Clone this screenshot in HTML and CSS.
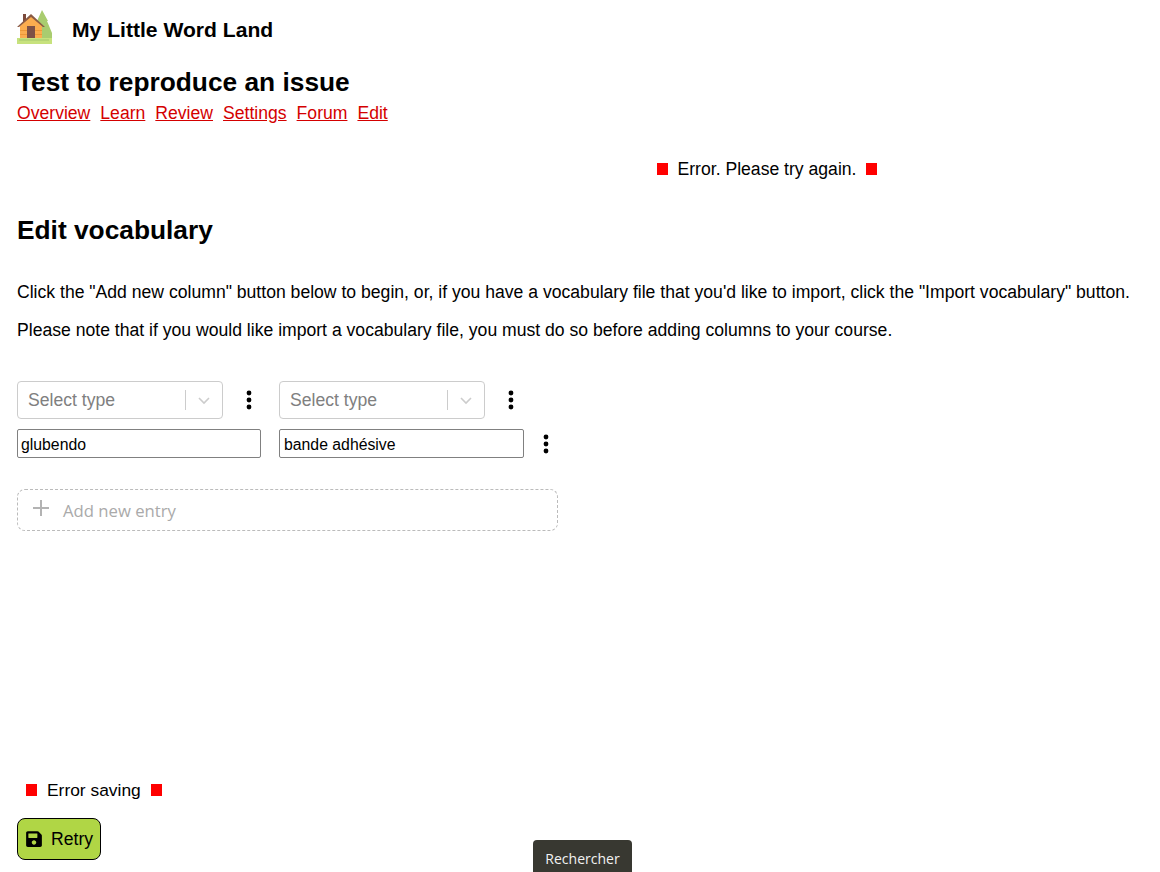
FILE: index.html
```html
<!DOCTYPE html>
<html>
	<head>
		<meta charset="utf-8">
		<title>My Little Word Land</title>
		<link rel="stylesheet" href="styles.css">
	</head>
	<body>
		<!-- header -->
		<div class="brand">
			<svg class="logo" viewBox="0 0 36 36" width="36" height="36">
				<polygon points="25,1 31,12 30,12 35,24 35,29 20,29 20,12" fill="#a9cc6f"/>
				<rect x="6" y="5" width="3" height="8" fill="#7b4a3c"/>
				<polygon points="3,17 14,6 25,17 25,29 3,29" fill="#fbad4f"/>
				<polygon points="0,18 14,5 28,18 26,18 14,8 2,18" fill="#8a5a44"/>
				<rect x="3" y="21" width="22" height="1" fill="#ee9838"/>
				<rect x="3" y="25" width="22" height="1" fill="#ee9838"/>
				<rect x="10" y="17" width="8" height="12" fill="#7d5146"/>
				<rect x="0" y="29" width="35" height="6" fill="#c7e27d"/>
				<rect x="2" y="30" width="30" height="2" fill="#a9cc6f" opacity="0.6"/>
			</svg>
			<span class="brand-name">My Little Word Land</span>
		</div>
		<h1 class="course-title">Test to reproduce an issue</h1>
		<div class="course-nav">
			<a href="#">Overview</a>
			<a href="#">Learn</a>
			<a href="#">Review</a>
			<a href="#">Settings</a>
			<a href="#">Forum</a>
			<a href="#">Edit</a>
		</div>

		<div class="error-top">
			<span class="err-square"></span>
			<span>Error. Please try again.</span>
			<span class="err-square"></span>
		</div>

		<h2 class="section-title">Edit vocabulary</h2>
		<p class="intro">Click the "Add new column" button below to begin, or, if you have a vocabulary file that you'd like to import, click the "Import vocabulary" button.</p>
		<p class="intro">Please note that if you would like import a vocabulary file, you must do so before adding columns to your course.</p>

		<!-- vocabulary table -->
		<div class="col-row">
			<div class="col-head">
				<div class="select">
					<span class="select-text">Select type</span>
					<span class="select-sep"></span>
					<svg class="select-arrow" viewBox="0 0 20 20" width="20" height="20"><path d="M5 8l5 5 5-5" fill="none" stroke="#ccc" stroke-width="1.6"/></svg>
				</div>
				<svg class="dots" viewBox="0 0 8 24" width="8" height="24"><circle cx="4" cy="5" r="2.4"/><circle cx="4" cy="12" r="2.4"/><circle cx="4" cy="19" r="2.4"/></svg>
			</div>
			<div class="col-head">
				<div class="select">
					<span class="select-text">Select type</span>
					<span class="select-sep"></span>
					<svg class="select-arrow" viewBox="0 0 20 20" width="20" height="20"><path d="M5 8l5 5 5-5" fill="none" stroke="#ccc" stroke-width="1.6"/></svg>
				</div>
				<svg class="dots" viewBox="0 0 8 24" width="8" height="24"><circle cx="4" cy="5" r="2.4"/><circle cx="4" cy="12" r="2.4"/><circle cx="4" cy="19" r="2.4"/></svg>
			</div>
		</div>
		<div class="entry-row">
			<input class="entry" type="text" value="glubendo">
			<input class="entry entry-wide" type="text" value="bande adhésive">
			<svg class="dots" viewBox="0 0 8 24" width="8" height="24"><circle cx="4" cy="5" r="2.4"/><circle cx="4" cy="12" r="2.4"/><circle cx="4" cy="19" r="2.4"/></svg>
		</div>

		<div class="add-entry">
			<svg class="plus" viewBox="0 0 16 16" width="16" height="16"><path d="M8 0v16M0 8h16" stroke="#b3b3b3" stroke-width="2"/></svg>
			<span>Add new entry</span>
		</div>

		<div class="error-save">
			<span class="err-square"></span>
			<span>Error saving</span>
			<span class="err-square"></span>
		</div>
		<button class="retry">
			<svg viewBox="0 0 448 512" width="16" height="18"><path d="M433.9 129.9l-83.9-83.9A48 48 0 0 0 316.1 32H48C21.5 32 0 53.5 0 80v352c0 26.5 21.5 48 48 48h352c26.5 0 48-21.5 48-48V163.9a48 48 0 0 0-14.1-34zM224 416c-35.3 0-64-28.7-64-64s28.7-64 64-64 64 28.7 64 64-28.7 64-64 64zm96-304.5V212c0 6.6-5.4 12-12 12H76c-6.6 0-12-5.4-12-12V108c0-6.6 5.4-12 12-12h228.5c3.2 0 6.2 1.3 8.5 3.5l3.5 3.5c2.2 2.2 3.5 5.3 3.5 8.5z"/></svg>
			<span>Retry</span>
		</button>

		<div class="tooltip">Rechercher</div>
	</body>
</html>
```

FILE: styles.css
```css
* {
	box-sizing: border-box;
}

body {
	margin: 0;
	padding: 0 17px;
	height: 872px;
	overflow: hidden;
	position: relative;
	font-family: "Liberation Sans", Arial, sans-serif;
	font-size: 17.6px;
	color: #000;
	background: #fff;
}

.brand {
	display: flex;
	align-items: center;
	height: 36px;
	margin-top: 12px;
}

.logo {
	display: block;
	margin-top: -6px;
}

.brand-name {
	margin-left: 19px;
	font-size: 21.1px;
	font-weight: bold;
}

.course-title {
	margin: 19px 0 0;
	font-size: 26.3px;
	line-height: 30px;
	font-weight: bold;
}

.course-nav {
	display: flex;
	gap: 10px;
	margin-top: 6px;
	line-height: 21px;
}

.course-nav a {
	color: #d40000;
}

.error-top {
	display: flex;
	align-items: center;
	justify-content: center;
	gap: 10px;
	height: 20px;
	margin-top: 35px;
	padding-left: 374px;
	white-space: nowrap;
}

.err-square {
	display: block;
	width: 11px;
	height: 12px;
	background: #f00;
}

.section-title {
	margin: 37px 0 0;
	font-size: 26.3px;
	line-height: 28px;
	font-weight: bold;
}

.intro {
	margin: 0;
	line-height: 18px;
	white-space: nowrap;
}

.section-title + .intro {
	margin-top: 39px;
}

.intro + .intro {
	margin-top: 20px;
}

.col-row {
	display: flex;
	gap: 18px;
	margin-top: 42px;
}

.col-head {
	display: flex;
	align-items: center;
	width: 244px;
}

.select {
	display: flex;
	align-items: center;
	width: 206px;
	height: 38px;
	padding-left: 10px;
	border: 1px solid #ccc;
	border-radius: 4px;
	color: #808080;
}

.select-text {
	flex: 1;
}

.select-sep {
	width: 1px;
	height: 20px;
	background: #ccc;
}

.select-arrow {
	margin: 0 8px;
}

.col-head .dots {
	margin-left: 22px;
}

.dots {
	display: block;
}

.entry-row {
	display: flex;
	align-items: center;
	margin-top: 10px;
}

.entry {
	width: 244px;
	height: 29px;
	padding: 2px 3px 0;
	margin-right: 18px;
	border: 1px solid #808080;
	border-radius: 2px;
	font-family: "Liberation Sans", Arial, sans-serif;
	font-size: 15.8px;
	color: #000;
	outline: none;
}

.entry-wide {
	width: 245px;
	padding-left: 4px;
	margin-right: 18px;
}

.add-entry {
	display: flex;
	align-items: center;
	gap: 14px;
	width: 541px;
	height: 42px;
	margin-top: 31px;
	padding-left: 15px;
	border: 1px dashed #bbb;
	border-radius: 8px;
	font-family: "Open Sans", sans-serif;
	font-size: 16.7px;
	color: #aaa;
}

.plus {
	margin-top: -4px;
}

.error-save {
	display: flex;
	align-items: center;
	gap: 10px;
	height: 20px;
	margin-top: 249px;
	padding-left: 9px;
	font-size: 17.4px;
}

.retry {
	display: flex;
	align-items: center;
	gap: 9px;
	width: 84px;
	height: 42px;
	margin-top: 18px;
	padding: 0 0 0 8px;
	border: 1px solid #000;
	border-radius: 8px;
	background: #b0d645;
	font-family: "Liberation Sans", Arial, sans-serif;
	font-size: 17.6px;
	color: #000;
}

.tooltip {
	position: absolute;
	left: 533px;
	top: 840px;
	width: 99px;
	height: 40px;
	padding-top: 9px;
	border-radius: 4px 4px 0 0;
	background: #383831;
	font-family: "Open Sans", sans-serif;
	font-size: 14px;
	text-align: center;
	color: #f2f2f2;
}
```
